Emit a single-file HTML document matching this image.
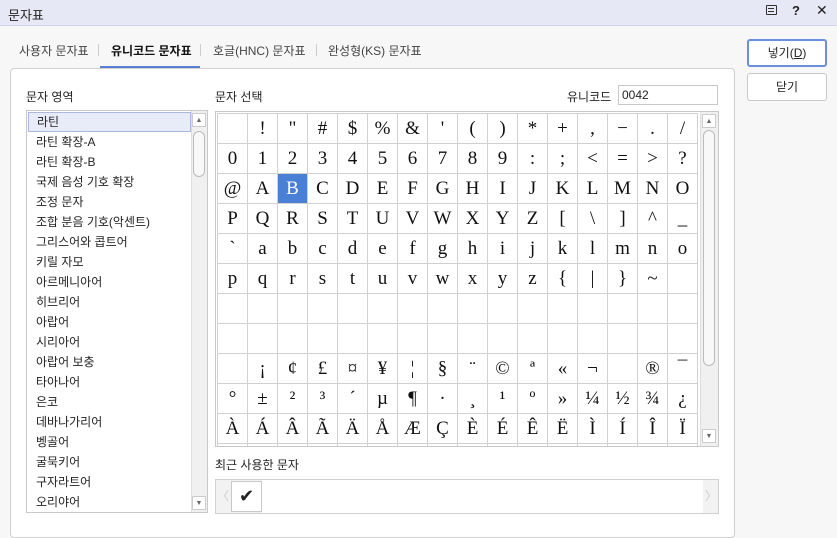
<!DOCTYPE html>
<html><head><meta charset="utf-8"><style>
*{margin:0;padding:0;box-sizing:border-box}
body{width:837px;height:525px;overflow:hidden;background:#f7f7f7;font-family:"Liberation Sans","Noto Sans CJK KR",sans-serif;font-size:12px;color:#222;position:relative}
.abs{position:absolute}
.title{left:0;top:0;width:837px;height:26px;background:#e6e9f5;border-bottom:1px solid #cfd3e3}
.tab{top:42px;font-size:12px;color:#444}
.panel{left:10px;top:68px;width:725px;height:470px;background:#fff;border:1px solid #d0d0d0;border-radius:4px}
.btn{left:747px;width:80px;height:28px;border:1px solid #c8c8c8;border-radius:3px;background:#fff;text-align:center;line-height:26px;font-size:12px}
.list{left:26px;top:110px;width:182px;height:403px;border:1px solid #c8c8c8;background:#fff}
.li{position:absolute;left:1px;width:163px;height:20px;line-height:20px;padding-left:8px;font-size:12px}
.sb{background:#f0f0f0;border-left:1px solid #ddd}
.grid{left:215px;top:111px;width:504px;height:336px;border:1px solid #c8c8c8;background:#fff;overflow:hidden}
.g{position:absolute;left:1px;top:1px;display:grid;grid-template-columns:repeat(16,29px);grid-auto-rows:29px;gap:1px;background:#d0d0d0;border:1px solid #d0d0d0}
.g div{background:#fff;font-family:"Liberation Serif","DejaVu Serif",serif;font-size:19px;text-align:center;line-height:30px;color:#111}
.g div.sel{background:#4a7fd6;color:#fff}
</style></head><body>
<div class="abs title"></div>
<div class="abs" style="left:8px;top:5px;font-size:13px">문자표</div>
<div class="abs" style="left:766px;top:5px;width:11px;height:10px;border:1.3px solid #333;border-radius:1px"></div>
<div class="abs" style="left:768px;top:8px;width:6px;height:1px;background:#333"></div>
<div class="abs" style="left:768px;top:11px;width:6px;height:1px;background:#333"></div>
<div class="abs" style="left:792px;top:3px;font-weight:bold;font-size:13px">?</div>
<div class="abs" style="left:816px;top:2px;font-size:14px">✕</div>

<div class="abs tab" style="left:19px">사용자 문자표</div>
<div class="abs" style="left:98px;top:44px;width:1px;height:12px;background:#ccc"></div>
<div class="abs tab" style="left:111px;color:#111;font-weight:bold">유니코드 문자표</div>
<div class="abs" style="left:100px;top:66px;width:100px;height:2px;background:#5b7fd3"></div>
<div class="abs" style="left:200px;top:44px;width:1px;height:12px;background:#ccc"></div>
<div class="abs tab" style="left:213px">호글(HNC) 문자표</div>
<div class="abs" style="left:316px;top:44px;width:1px;height:12px;background:#ccc"></div>
<div class="abs tab" style="left:328px">완성형(KS) 문자표</div>

<div class="abs btn" style="top:39px;border:2px solid #6b8ee0;line-height:24px">넣기(<u>D</u>)</div>
<div class="abs btn" style="top:73px">닫기</div>

<div class="abs panel"></div>
<div class="abs" style="left:26px;top:88px">문자 영역</div>
<div class="abs" style="left:215px;top:88px">문자 선택</div>
<div class="abs" style="left:567px;top:88px">유니코드</div>
<div class="abs" style="left:618px;top:85px;width:100px;height:20px;border:1px solid #c8c8c8;background:#fff;padding-left:3px;line-height:18px">0042</div>

<div class="abs list">
<div class="li" style="top:1px;background:#e8ecf8;border:1px solid #a8b8e0;line-height:18px">라틴</div>
<div class="li" style="top:21px">라틴 확장-A</div>
<div class="li" style="top:41px">라틴 확장-B</div>
<div class="li" style="top:61px">국제 음성 기호 확장</div>
<div class="li" style="top:81px">조정 문자</div>
<div class="li" style="top:101px">조합 분음 기호(악센트)</div>
<div class="li" style="top:121px">그리스어와 콥트어</div>
<div class="li" style="top:141px">키릴 자모</div>
<div class="li" style="top:161px">아르메니아어</div>
<div class="li" style="top:181px">히브리어</div>
<div class="li" style="top:201px">아랍어</div>
<div class="li" style="top:221px">시리아어</div>
<div class="li" style="top:241px">아랍어 보충</div>
<div class="li" style="top:261px">타아나어</div>
<div class="li" style="top:281px">은코</div>
<div class="li" style="top:301px">데바나가리어</div>
<div class="li" style="top:321px">벵골어</div>
<div class="li" style="top:341px">굴묵키어</div>
<div class="li" style="top:361px">구자라트어</div>
<div class="li" style="top:381px">오리야어</div>
<div class="abs sb" style="left:164px;top:0;width:16px;height:401px"></div>
<div class="abs" style="left:166px;top:20px;width:12px;height:46px;border:1px solid #bbb;border-radius:6px;background:#f8f8f8"></div>
<div class="abs" style="left:165px;top:2px;width:14px;height:14px;border:1px solid #ccc;background:#fff;font-size:7px;text-align:center;line-height:13px;color:#666">▲</div>
<div class="abs" style="left:165px;top:385px;width:14px;height:14px;border:1px solid #ccc;background:#fff;font-size:7px;text-align:center;line-height:13px;color:#666">▼</div>
</div>

<div class="abs grid">
<div class="g">
<div></div><div>!</div><div>"</div><div>#</div><div>$</div><div>%</div><div>&amp;</div><div>'</div><div>(</div><div>)</div><div>*</div><div>+</div><div>,</div><div>−</div><div>.</div><div>/</div>
<div>0</div><div>1</div><div>2</div><div>3</div><div>4</div><div>5</div><div>6</div><div>7</div><div>8</div><div>9</div><div>:</div><div>;</div><div>&lt;</div><div>=</div><div>&gt;</div><div>?</div>
<div>@</div><div>A</div><div class="sel">B</div><div>C</div><div>D</div><div>E</div><div>F</div><div>G</div><div>H</div><div>I</div><div>J</div><div>K</div><div>L</div><div>M</div><div>N</div><div>O</div>
<div>P</div><div>Q</div><div>R</div><div>S</div><div>T</div><div>U</div><div>V</div><div>W</div><div>X</div><div>Y</div><div>Z</div><div>[</div><div>\</div><div>]</div><div>^</div><div>_</div>
<div>`</div><div>a</div><div>b</div><div>c</div><div>d</div><div>e</div><div>f</div><div>g</div><div>h</div><div>i</div><div>j</div><div>k</div><div>l</div><div>m</div><div>n</div><div>o</div>
<div>p</div><div>q</div><div>r</div><div>s</div><div>t</div><div>u</div><div>v</div><div>w</div><div>x</div><div>y</div><div>z</div><div>{</div><div>|</div><div>}</div><div>~</div><div></div>
<div></div><div></div><div></div><div></div><div></div><div></div><div></div><div></div><div></div><div></div><div></div><div></div><div></div><div></div><div></div><div></div>
<div></div><div></div><div></div><div></div><div></div><div></div><div></div><div></div><div></div><div></div><div></div><div></div><div></div><div></div><div></div><div></div>
<div></div><div>¡</div><div>¢</div><div>£</div><div>¤</div><div>¥</div><div>¦</div><div>§</div><div>¨</div><div>©</div><div>ª</div><div>«</div><div>¬</div><div></div><div>®</div><div>¯</div>
<div>°</div><div>±</div><div>²</div><div>³</div><div>´</div><div>µ</div><div>¶</div><div>·</div><div>¸</div><div>¹</div><div>º</div><div>»</div><div>¼</div><div>½</div><div>¾</div><div>¿</div>
<div>À</div><div>Á</div><div>Â</div><div>Ã</div><div>Ä</div><div>Å</div><div>Æ</div><div>Ç</div><div>È</div><div>É</div><div>Ê</div><div>Ë</div><div>Ì</div><div>Í</div><div>Î</div><div>Ï</div>
<div>Ð</div><div>Ñ</div><div>Ò</div><div>Ó</div><div>Ô</div><div>Õ</div><div>Ö</div><div>×</div><div>Ø</div><div>Ù</div><div>Ú</div><div>Û</div><div>Ü</div><div>Ý</div><div>Þ</div><div>ß</div>
</div>
<div class="abs sb" style="left:484px;top:0;width:18px;height:334px"></div>
<div class="abs" style="left:487px;top:18px;width:12px;height:236px;border:1px solid #bbb;border-radius:6px;background:#f8f8f8"></div>
<div class="abs" style="left:486px;top:2px;width:14px;height:14px;border:1px solid #ccc;background:#fff;font-size:7px;text-align:center;line-height:13px;color:#666">▲</div>
<div class="abs" style="left:486px;top:317px;width:14px;height:14px;border:1px solid #ccc;background:#fff;font-size:7px;text-align:center;line-height:13px;color:#666">▼</div>
</div>

<div class="abs" style="left:215px;top:456px">최근 사용한 문자</div>
<div class="abs" style="left:215px;top:479px;width:504px;height:35px;border:1px solid #d0d0d0;background:#f2f2f2">
<div class="abs" style="left:0;top:0;width:14px;height:33px;color:#ccc;text-align:center;line-height:33px">〈</div>
<div class="abs" style="left:15px;top:1px;width:31px;height:31px;border:1px solid #c8c8c8;background:#fff;text-align:center;line-height:29px;font-size:18px">✔</div>
<div class="abs" style="left:46px;top:0;width:441px;height:33px;background:#fff"></div>
<div class="abs" style="right:0;top:0;width:14px;height:33px;color:#ccc;text-align:center;line-height:33px">〉</div>
</div>
</body></html>
